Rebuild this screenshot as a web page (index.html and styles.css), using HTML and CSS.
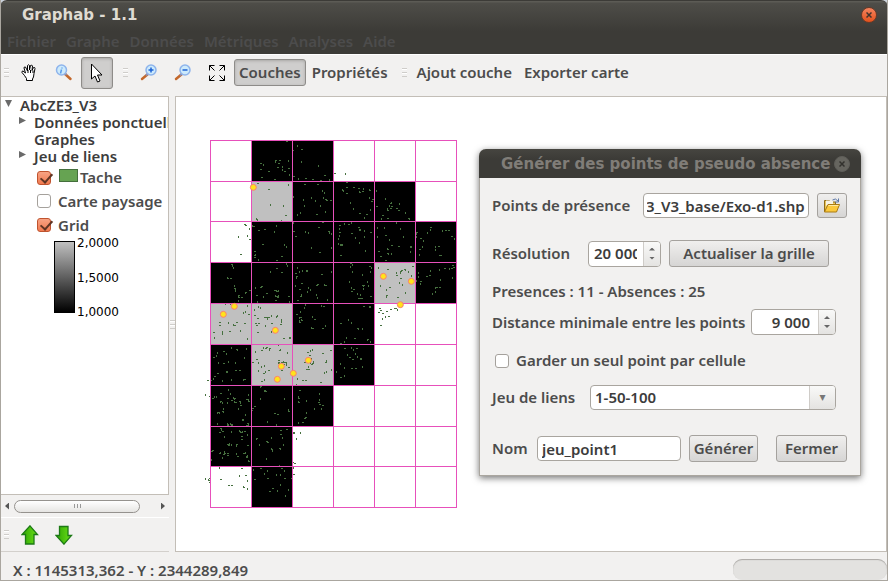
FILE: index.html
```html
<!DOCTYPE html>
<html lang="fr">
<head>
<meta charset="utf-8">
<title>Graphab - 1.1</title>
<link rel="stylesheet" href="styles.css">
</head>
<body>
<div class="window">
  <header class="window-head">
    <div class="titlebar">
      <h1 class="title">Graphab - 1.1</h1>
      <button class="close" type="button" aria-label="Fermer la fenêtre">
        <svg width="6" height="6" viewBox="0 0 6 6"><path d="M.5.5l5 5M5.500.5l-5 5" stroke="#42332c" stroke-width="1.500"/></svg>
      </button>
    </div>
    <nav class="menubar">
      <button type="button">Fichier</button>
      <button type="button">Graphe</button>
      <button type="button">Données</button>
      <button type="button">Métriques</button>
      <button type="button">Analyses</button>
      <button type="button">Aide</button>
    </nav>
  </header>

  <div class="toolbar">
    <span class="grip"></span>
    <button class="tool" type="button" aria-label="Déplacer">
      <svg width="18" height="18" viewBox="0 0 18 18"><path d="M5.500 16.500v-2l-2-3-2.500-3q-.5-1.500 1-1.500l2.500 2-1.500-5q0-1.500 1.500-1l2 4V1.500q1-1.500 2 0V6l1-4.500q1.500-1 2 .5l-.5 4.500 1.500-3q1.500-.5 1.500 1l-1 5-.5 3.500-1 2v1.500z" fill="#fff" stroke="#000"/><path d="M7 6v3M9.500 6v3M12 6.500v2.500" stroke="#000" fill="none"/></svg>
    </button>
    <button class="tool" type="button" aria-label="Information">
      <svg width="18" height="18" viewBox="0 0 18 18"><path d="M9.500 9.500l6 5.500" stroke="#c4682b" stroke-width="2.500" stroke-linecap="round"/><path d="M9.500 9l2 2" stroke="#8f8faf" stroke-width="2"/><circle cx="6.500" cy="6" r="5" fill="#cdeafb" stroke="#8eb4ec" stroke-width="1.500"/><path d="M7 3.500v1M6.500 5.500l-1 4" stroke="#5a9bea" stroke-width="1.500"/></svg>
    </button>
    <button class="tool tool-active" type="button" aria-label="Sélection" aria-pressed="true">
      <svg width="14" height="20" viewBox="0 0 14 20"><path d="M1.500 1v15l3.500-3 2.500 6 2.500-1-2.500-6h4.500z" fill="#fff" stroke="#000"/></svg>
    </button>
    <span class="grip"></span>
    <button class="tool" type="button" aria-label="Zoom avant">
      <svg width="18" height="18" viewBox="0 0 18 18"><path d="M8 10l-6 5" stroke="#c4682b" stroke-width="2.500" stroke-linecap="round"/><path d="M8 9.500l-2 2" stroke="#8f8faf" stroke-width="2"/><circle cx="11" cy="6" r="5" fill="#cdeafb" stroke="#8eb4ec" stroke-width="1.500"/><path d="M8.500 6h5M11 3.500v5" stroke="#1c62d6" stroke-width="1.500"/></svg>
    </button>
    <button class="tool" type="button" aria-label="Zoom arrière">
      <svg width="18" height="18" viewBox="0 0 18 18"><path d="M8 10l-6 5" stroke="#c4682b" stroke-width="2.500" stroke-linecap="round"/><path d="M8 9.500l-2 2" stroke="#8f8faf" stroke-width="2"/><circle cx="11" cy="6" r="5" fill="#cdeafb" stroke="#8eb4ec" stroke-width="1.500"/><path d="M8.500 6h5" stroke="#1c62d6" stroke-width="1.500"/></svg>
    </button>
    <button class="tool" type="button" aria-label="Vue globale">
      <svg width="18" height="18" viewBox="0 0 18 18"><path d="M6.500 1.500h-5v5M11.500 1.500h5v5M6.500 16.500h-5v-5M11.500 16.500h5v-5M1.500 1.500l5 5M16.500 1.500l-5 5M1.500 16.500l5-5M16.500 16.500l-5-5" fill="none" stroke="#000"/></svg>
    </button>
    <button class="text-tool text-tool-active" type="button" aria-pressed="true">Couches</button>
    <button class="text-tool" type="button">Propriétés</button>
    <span class="grip"></span>
    <button class="text-tool" type="button">Ajout couche</button>
    <button class="text-tool" type="button">Exporter carte</button>
  </div>

  <main class="workspace">
    <aside class="side">
      <div class="tree">
        <ul class="nodes">
          <li class="node root"><span class="arrow open"></span>AbcZE3_V3</li>
          <li class="node"><span class="arrow"></span>Données ponctuelles</li>
          <li class="node leaf">Graphes</li>
          <li class="node"><span class="arrow"></span>Jeu de liens</li>
        </ul>
        <label class="layer"><input class="check" type="checkbox" checked><span class="swatch"></span><span>Tache</span></label>
        <label class="layer"><input class="check" type="checkbox"><span>Carte paysage</span></label>
        <label class="layer"><input class="check" type="checkbox" checked><span>Grid</span></label>
        <div class="legend">
          <div class="ramp"></div>
          <div class="ramp-values"><span>2,0000</span><span>1,5000</span><span>1,0000</span></div>
        </div>
      </div>
      <div class="scroll">
        <span class="scroll-arrow left"></span>
        <div class="scroll-track"><div class="thumb"><i></i><i></i><i></i></div></div>
        <span class="scroll-arrow right"></span>
      </div>
      <div class="layer-tools">
        <span class="grip"></span>
        <button class="tool" type="button" aria-label="Monter">
          <svg width="18" height="20" viewBox="0 0 18 20"><defs><linearGradient id="leaf"><stop offset="0" stop-color="#2fa503"/><stop offset="1" stop-color="#6be01a"/></linearGradient></defs><path d="M9 .8l7.500 8.700h-3.500v9.500h-8.500v-9.500h-3.500z" fill="url(#leaf)" stroke="#1d7a16" stroke-width="1.300"/></svg>
        </button>
        <button class="tool" type="button" aria-label="Descendre">
          <svg width="18" height="20" viewBox="0 0 18 20"><path d="M9 19.200l7.500-8.700h-3.500v-9h-8.500v9h-3.500z" fill="url(#leaf)" stroke="#1d7a16" stroke-width="1.300"/></svg>
        </button>
      </div>
    </aside>
    <div class="splitter"><span class="grip"></span></div>
    <section class="map" aria-label="Carte">
      <svg class="map-drawing" width="265" height="385" viewBox="0 0 795 1155" shape-rendering="crispEdges">
        <g fill="#000">
          <path d="M154 31H400V154H154zM277 154H646V274H277zM154 274H769V397H154zM31 397H523V520H31zM646 397H769V520H646zM277 520H523V643H277zM31 643H154V766H31zM400 643H523V766H400zM31 766H400V889H31zM31 889H277V1009H31zM154 1009H277V1132H154z"/>
        </g>
        <path fill="#c0c0c0" d="M154 154H277V274H154zM523 397H646V520H523zM31 520H277V643H31zM154 643H400V766H154z"/>
        <g fill="none" stroke="#46703f" stroke-width="3">
          <g>
            <path transform="translate(-3 0)" d="M261 34h6M280 60h6M306 58h6M183 100h6M183 118h6M229 91h6M240 91h6M238 100h6M234 112h6M207 124h6M256 125h6M268 115h6M186 142h6M226 148h6M282 140h6M318 144h6M338 147h6M376 136h6M362 151h6M404 130h6M173 160h6M207 178h6M314 163h6M355 163h6M440 157h6M258 256h6M351 253h6M378 208h6M382 211h6M394 210h6M441 173h6M441 190h6M462 172h6M477 175h6M479 187h6M490 184h6M510 182h6M520 208h6M517 214h6M480 249h6M502 252h6M530 230h6M573 220h6M577 230h6M574 235h6M591 235h6M596 240h6M564 242h6M549 256h6M564 265h6M518 274h6M626 265h6M135 274h6M135 283h6M138 286h6M162 290h6M177 301h6M189 344h6M194 298h6M150 328h6M123 373h6M282 304h6M288 319h6M356 292h6M370 277h6M386 304h6M361 366h6M421 286h6M421 308h6M423 342h6M423 345h6M424 375h6M446 282h6M456 310h6M476 291h6M480 299h6M513 307h6M558 316h6M596 349h6M577 346h6M543 379h6M538 364h6M564 358h6M564 370h6M558 391h6M650 308h6M662 325h6M694 292h6M738 302h6M746 302h6M756 319h6M724 376h6M720 376h6M716 350h6M165 364h6M165 382h6M661 359h6M664 275h6"/>
            <path transform="translate(0 -3)" d="M292 48v6M190 105v6M227 95v6M247 112v6M247 120v6M265 94v6M268 135v6M304 96v6M355 108v6M294 148v6M389 150v6M437 132v6M265 165v6M280 201v6M211 225v6M250 228v6M169 267v6M172 270v6M244 273v6M310 210v6M313 229v6M302 249v6M292 256v6M334 205v6M366 183v6M373 190v6M370 204v6M346 213v6M361 228v6M376 246v6M429 184v6M426 181v6M477 187v6M489 177v6M508 180v6M451 219v6M461 237v6M508 204v6M492 265v6M510 240v6M528 184v6M556 208v6M561 237v6M568 228v6M574 220v6M598 222v6M616 249v6M544 268v6M627 267v6M157 288v6M148 297v6M142 318v6M115 321v6M223 306v6M229 288v6M253 345v6M259 351v6M280 279v6M316 306v6M325 309v6M388 310v6M394 312v6M334 355v6M394 355v6M418 298v6M418 318v6M415 327v6M415 342v6M427 345v6M433 282v6M454 280v6M466 324v6M478 300v6M492 303v6M492 322v6M478 339v6M481 300v6M495 363v6M532 294v6M532 320v6M553 295v6M568 331v6M574 372v6M589 280v6M600 298v6M609 322v6M561 357v6M565 372v6M630 366v6M633 352v6M630 352v6M648 313v6M648 322v6M682 310v6M690 301v6M670 334v6M667 352v6M706 351v6M706 361v6M727 303v6M764 327v6M658 375v6M165 375v6"/>
          </g>
          <g transform="translate(0 375)">
            <path transform="translate(-3 0)" d="M96 28h6M85 70h6M93 70h6M104 99h6M116 122h6M116 128h6M127 126h6M138 112h6M149 105h6M166 2h6M232 16h6M246 4h6M230 41h6M246 51h6M172 122h6M182 96h6M186 94h6M202 116h6M229 107h6M231 110h6M225 106h6M231 123h6M233 127h6M229 137h6M268 124h6M289 55h6M290 65h6M321 46h6M322 49h6M302 124h6M306 85h6M350 91h6M353 87h6M367 58h6M379 92h6M293 137h6M301 103h6M454 24h6M456 109h6M463 103h6M490 90h6M492 92h6M476 131h6M480 131h6M486 129h6M510 34h6M513 124h6M564 43h6M569 96h6M592 61h6M602 48h6M606 46h6M616 42h6M640 34h6M604 70h6M562 121h6M595 127h6M664 79h6M682 64h6M690 62h6M708 97h6M712 97h6M720 97h6M735 39h6M757 40h6M760 30h6M762 37h6M77 145h6M82 145h6M61 202h6M60 210h6M42 232h6M90 228h6M104 210h6M111 203h6M135 204h6M147 177h6M166 181h6M174 190h6M195 187h6M202 187h6M208 187h6M168 206h6M176 206h6M174 233h6M170 210h6M217 204h6M242 208h6M251 250h6M290 177h6M303 186h6M307 196h6M300 201h6M338 219h6M369 219h6M345 192h6M371 155h6M391 145h6M424 204h6M474 220h6M465 250h6M424 264h6M509 154h6M509 157h6M493 153h6M505 252h6M541 160h6M537 173h6M542 167h6M550 175h6M560 168h6M572 164h6M584 160h6M588 160h6M568 183h6M543 211h6M72 288h6M72 290h6M42 308h6M72 324h6M110 282h6M44 365h6M53 356h6M108 346h6M121 347h6M24 376h6M136 372h6M198 280h6M210 280h6M186 286h6M202 278h6M239 287h6M159 321h6M170 312h6M192 354h6M186 378h6M206 347h6M238 317h6M246 323h6M256 323h6M251 329h6M245 345h6M267 337h6M325 292h6M330 302h6M315 322h6M340 325h6M337 328h6M370 296h6M379 322h6M322 342h6M326 342h6M310 376h6M392 287h6M434 281h6M470 279h6M449 308h6M460 313h6M483 311h6M483 314h6M457 339h6M468 341h6M424 366h6"/>
            <path transform="translate(0 -3)" d="M96 34v6M101 38v6M83 70v6M102 92v6M107 102v6M107 109v6M114 126v6M114 138v6M136 115v6M176 14v6M262 34v6M259 28v6M211 50v6M165 100v6M190 127v6M171 142v6M234 108v6M226 122v6M236 122v6M268 142v6M292 38v6M299 52v6M306 49v6M290 68v6M287 92v6M322 112v6M325 100v6M331 106v6M349 120v6M351 130v6M372 91v6M382 136v6M394 50v6M304 120v6M450 35v6M457 30v6M456 50v6M447 80v6M453 100v6M472 118v6M480 120v6M486 60v6M491 92v6M505 92v6M489 102v6M513 40v6M510 51v6M503 82v6M536 38v6M542 92v6M560 105v6M590 55v6M601 55v6M615 44v6M625 50v6M633 64v6M607 89v6M597 84v6M560 126v6M616 115v6M654 53v6M655 66v6M650 78v6M660 86v6M690 48v6M705 100v6M706 112v6M698 118v6M718 45v6M748 43v6M756 69v6M722 75v6M90 147v6M75 147v6M142 153v6M129 174v6M135 170v6M74 180v6M86 205v6M101 210v6M66 230v6M66 238v6M122 228v6M44 250v6M142 252v6M174 155v6M164 164v6M181 160v6M201 188v6M214 184v6M232 182v6M229 185v6M201 192v6M196 213v6M243 200v6M245 196v6M215 232v6M268 248v6M271 250v6M234 270v6M317 151v6M313 160v6M302 172v6M297 190v6M305 195v6M297 198v6M338 186v6M335 220v6M375 213v6M363 154v6M399 261v6M445 194v6M454 204v6M475 222v6M487 222v6M439 250v6M434 262v6M503 255v6M511 262v6M557 186v6M548 193v6M593 164v6M95 280v6M52 295v6M50 302v6M78 297v6M54 325v6M84 322v6M78 350v6M81 352v6M107 325v6M132 310v6M138 282v6M111 286v6M41 372v6M67 378v6M94 374v6M129 376v6M189 280v6M208 284v6M165 290v6M240 285v6M262 294v6M175 324v6M183 337v6M194 332v6M196 352v6M174 348v6M234 325v6M239 324v6M250 321v6M258 325v6M260 330v6M192 375v6M337 285v6M332 288v6M325 310v6M334 312v6M340 322v6M330 324v6M378 318v6M325 337v6M372 355v6M378 350v6M394 344v6M291 372v6M454 280v6M460 286v6M465 296v6M441 300v6M472 305v6M421 326v6M486 336v6M433 340v6M409 352v6M433 364v6"/>
          </g>
          <g transform="translate(0 750)">
            <path transform="translate(-3 0)" d="M24 2h6M34 2h6M64 40h6M30 48h6M38 54h6M64 64h6M84 54h6M95 61h6M105 56h6M108 66h6M122 76h6M121 64h6M142 58h6M146 64h6M56 98h6M68 94h6M128 119h6M128 122h6M84 132h6M93 133h6M84 137h6M96 137h6M142 136h6M144 130h6M198 34h6M196 31h6M182 20h6M164 80h6M158 86h6M156 90h6M225 100h6M234 103h6M266 93h6M258 139h6M300 31h6M297 54h6M296 68h6M357 66h6M360 73h6M369 76h6M316 114h6M318 112h6M308 127h6M362 8h6M318 0h6M64 146h6M69 154h6M60 157h6M120 154h6M124 156h6M135 154h6M126 169h6M84 193h6M87 196h6M111 194h6M126 178h6M144 195h6M60 220h6M75 220h6M83 220h6M72 223h6M85 226h6M114 229h6M40 212h6M34 214h6M132 220h6M140 229h6M141 232h6M148 244h6M172 175h6M201 184h6M203 187h6M243 151h6M243 163h6M261 148h6M216 209h6M240 206h6M283 158h6M283 160h6M284 250h6M278 248h6M126 265h6M63 298h6M138 286h6M87 316h6M96 316h6M132 322h6M30 294h6M30 306h6M26 302h6M182 265h6M165 298h6M204 295h6M219 325h6M210 334h6M255 295h6M276 295h6M282 283h6M245 265h6"/>
            <path transform="translate(0 -3)" d="M16 45v6M43 50v6M49 50v6M85 30v6M90 42v6M61 66v6M67 68v6M82 68v6M102 58v6M102 67v6M99 54v6M120 70v6M145 44v6M145 60v6M52 99v6M58 99v6M71 88v6M70 97v6M114 88v6M135 105v6M52 132v6M82 132v6M90 132v6M96 134v6M145 134v6M181 21v6M181 57v6M194 32v6M253 57v6M265 90v6M202 126v6M229 136v6M290 15v6M294 50v6M294 66v6M318 62v6M343 88v6M358 42v6M358 60v6M364 87v6M319 98v6M294 128v6M64 150v6M73 170v6M94 157v6M118 154v6M126 155v6M142 165v6M87 193v6M108 198v6M94 195v6M61 218v6M67 234v6M73 217v6M110 222v6M36 214v6M34 240v6M136 220v6M142 228v6M145 242v6M169 177v6M178 196v6M214 174v6M201 186v6M214 208v6M217 214v6M246 174v6M250 195v6M241 206v6M199 237v6M238 258v6M301 158v6M289 177v6M280 264v6M58 264v6M118 288v6M142 303v6M130 322v6M142 326v6M16 297v6M25 300v6M160 270v6M193 282v6M202 273v6M229 286v6M241 286v6M252 273v6M240 314v6M232 333v6M265 330v6M256 348v6"/>
          </g>
        </g>
        <path fill="none" stroke="#e750bb" stroke-width="3" d="M31.500 31V1134M154.500 31V1134M277.500 31V1134M400.500 31V1134M523.500 31V1134M646.500 31V1134M769.500 31V1134M30 31.500H771M30 154.500H771M30 274.500H771M30 397.500H771M30 520.500H771M30 643.500H771M30 766.500H771M30 889.500H771M30 1009.500H771M30 1132.500H771"/>
        <g fill="#ffe31b" stroke="#fa8072" stroke-width="3" shape-rendering="auto">
          <circle cx="160" cy="172" r="9"/>
          <circle cx="550" cy="439" r="9"/>
          <circle cx="634" cy="454" r="9"/>
          <circle cx="601" cy="524" r="9"/>
          <circle cx="103" cy="529" r="9"/>
          <circle cx="70" cy="553" r="9"/>
          <circle cx="226" cy="601" r="9"/>
          <circle cx="325" cy="691" r="9"/>
          <circle cx="244" cy="709" r="9"/>
          <circle cx="280" cy="730" r="9"/>
          <circle cx="232" cy="748" r="9"/>
        </g>
      </svg>
    </section>
  </main>

  <footer class="status">
    <output>X : 1145313,362 - Y : 2344289,849</output>
    <div class="trough"></div>
  </footer>
</div>

<form class="dialog" role="dialog" aria-labelledby="dialog-title">
  <header class="dialog-head">
    <h2 class="title" id="dialog-title">Générer des points de pseudo absence</h2>
    <button class="close muted" type="button" aria-label="Fermer le dialogue">
      <svg width="6" height="6" viewBox="0 0 6 6"><path d="M.5.5l5 5M5.500.5l-5 5" stroke="#33322e" stroke-width="1.500"/></svg>
    </button>
  </header>
  <div class="dialog-body">
    <div class="row first">
      <label for="presence">Points de présence</label>
      <input class="field path" id="presence" type="text" value="AbcZE3_V3_base/Exo-d1.shp">
      <button class="button browse" type="button" aria-label="Parcourir">
        <svg width="18" height="16" viewBox="0 0 18 16"><path d="M1.500 14V2.500h5l1 1.500h5v3" fill="#e8c65a" stroke="#8f6b16"/><path d="M3 2.500h7v5h-7z" fill="#f7f3e4"/><path d="M1.500 14l3.500-7.500h11.500l-3 7.500z" fill="#fbc93c" stroke="#a87a14"/><path d="M5.500 7.500h10" stroke="#ffe9a0"/><path d="M9.500 2q3-2.500 5.500 1M15.500.5v3.500h-3.500" fill="none" stroke="#5d78a8"/></svg>
      </button>
    </div>
    <div class="row resolution">
      <label for="resolution">Résolution</label>
      <span class="spinner"><input id="resolution" type="text" value="20 000"><span class="steps"><button type="button" aria-label="Augmenter"></button><button class="down" type="button" aria-label="Diminuer"></button></span></span>
      <button class="button refresh" type="button">Actualiser la grille</button>
    </div>
    <p class="summary">Presences : 11 - Absences : 25</p>
    <div class="row distance">
      <label for="distance">Distance minimale entre les points</label>
      <span class="spinner wide"><input id="distance" type="text" value="9 000"><span class="steps"><button type="button" aria-label="Augmenter"></button><button class="down" type="button" aria-label="Diminuer"></button></span></span>
    </div>
    <label class="row single"><input class="check" type="checkbox"><span>Garder un seul point par cellule</span></label>
    <div class="row links">
      <label for="links">Jeu de liens</label>
      <span class="combo"><select id="links"><option>1-50-100</option></select></span>
    </div>
    <div class="row name">
      <label for="name">Nom</label>
      <input class="field" id="name" type="text" value="jeu_point1">
      <button class="button" type="submit">Générer</button>
      <button class="button dismiss" type="button">Fermer</button>
    </div>
  </div>
</form>
<script src="script.js"></script>
</body>
</html>
```
FILE: styles.css
```css
* { box-sizing: border-box; }

body {
  margin: 0;
  background: #f2f1f0;
  color: #4c4c4c;
  font: 600 15px/17px "Noto Sans", "Open Sans", sans-serif;
}

button, input, select {
  margin: 0;
  padding: 0;
  border: 0;
  background: none;
  color: inherit;
  font: inherit;
}

h1, h2, p, ul { margin: 0; padding: 0; }

.window {
  display: flex;
  flex-direction: column;
  min-height: 100vh;
  border: 1px solid #aaa69f;
  border-top: 0;
  overflow: hidden;
}

.window-head {
  margin: 0 -1px;
  height: 54px;
  border-top: 1px solid #3c3b37;
  border-radius: 7px 7px 0 0;
  background: linear-gradient(#5c5b55 0 1px, #4e4d48 2px, #3c3b37 30px);
  box-shadow: 0 -8px 0 #cbd3dd;
}

.titlebar {
  display: flex;
  align-items: center;
  justify-content: space-between;
  height: 27px;
  padding: 0 11px 0 22px;
}

.title {
  color: #dfdbd2;
  font: bold 15px/16px "DejaVu Sans", sans-serif;
  white-space: nowrap;
}

.close {
  display: flex;
  align-items: center;
  justify-content: center;
  width: 16px;
  height: 16px;
  border-radius: 8px;
  border: 1px solid #6b3a27;
  background: linear-gradient(#f5845f, #e2511c);
}

.muted {
  border-color: #5f5e59;
  background: #66655f;
}

.menubar {
  display: flex;
  gap: 10px;
  padding: 5px 7px;
  color: #4c4c4c;
}

.toolbar {
  display: flex;
  align-items: center;
  height: 42px;
  padding: 0 3px 6px;
  border-top: 1px solid #fff;
}

.grip {
  flex: none;
  width: 5px;
  height: 9px;
  background: repeating-linear-gradient(#cfcdca 0 1px, #fff 1px 2px, transparent 2px 4px);
}

.tool {
  display: flex;
  align-items: center;
  justify-content: center;
  flex: none;
  width: 34px;
  height: 32px;
}

.toolbar .grip + .tool { margin-left: 4px; }
.toolbar .grip + .text-tool { margin-left: 4px; }
.toolbar .tool + .grip { margin-left: 10px; }
.toolbar .text-tool + .grip { margin-left: 8px; }

.tool-active, .text-tool-active {
  border: 1px solid #8e8c89;
  border-radius: 3px;
  background: #cfcecd;
  box-shadow: inset 0 1px 3px #a9a8a6;
}

.tool-active { width: 32px; }

.text-tool {
  height: 27px;
  padding: 0 6px;
  white-space: nowrap;
}

.text-tool-active { padding: 0 4px; }

.workspace {
  display: flex;
  flex: 1;
}

.side {
  display: flex;
  flex-direction: column;
  width: 168px;
  flex: none;
}

.tree {
  flex: 1;
  border: 1px solid #c3beb7;
  border-left: 0;
  background: #fff;
  color: #3c3c3c;
  overflow: hidden;
}

.nodes { list-style: none; white-space: nowrap; }

.node {
  display: flex;
  align-items: center;
  padding-left: 18px;
}

.root { padding-left: 4px; }
.leaf { padding-left: 33px; }

.arrow {
  flex: none;
  width: 7px;
  height: 7px;
  margin: 0 8px 4px 0;
  background: #6a6a6a;
  clip-path: polygon(0 0, 100% 50%, 0 100%);
}

.open { clip-path: polygon(0 0, 100% 0, 50% 100%); }

.layer {
  display: flex;
  align-items: center;
  height: 24px;
  padding-left: 36px;
  color: #4c4c4c;
  white-space: nowrap;
}

.check {
  flex: none;
  appearance: none;
  width: 14px;
  height: 14px;
  margin-right: 7px;
  border: 1px solid #a5a19c;
  border-radius: 3px;
  background: #fff;
}

.check:checked {
  border-color: #c0532e;
  background: linear-gradient(#f7a384, #f17a50);
}

.check:checked::after {
  content: "";
  display: block;
  width: 5px;
  height: 10px;
  margin: -1px 0 0 5px;
  border: solid #5f3524;
  border-width: 0 2px 2px 0;
  transform: rotate(42deg);
}

.swatch {
  width: 19px;
  height: 13px;
  margin: 0 2px 4px 1px;
  border: 1px solid #446f3c;
  background: #66a352;
}

.layer:has(.swatch) { padding-top: 1px; }

.legend {
  display: flex;
  gap: 2px;
  margin: 4px 0 0 53px;
  color: #000;
  font: 12px/14px "DejaVu Sans", sans-serif;
}

.ramp {
  width: 21px;
  height: 72px;
  border: 1px solid #000;
  background: linear-gradient(#c0c0c0, #000);
}

.ramp-values {
  display: flex;
  flex-direction: column;
  justify-content: space-between;
  height: 83px;
  margin-top: -5px;
}

.scroll {
  display: flex;
  align-items: center;
  height: 22px;
  padding: 0 4px;
}

.scroll-arrow {
  width: 4px;
  height: 7px;
  background: #555;
  clip-path: polygon(100% 0, 0 50%, 100% 100%);
}

.right { clip-path: polygon(0 0, 100% 50%, 0 100%); }

.scroll-track { flex: 1; padding: 0 21px 0 5px; }

.thumb {
  display: flex;
  align-items: center;
  justify-content: center;
  gap: 2px;
  height: 13px;
  border: 1px solid #95928e;
  border-radius: 7px;
  background: linear-gradient(#fff, #e6e5e3);
}

.thumb i { width: 1px; height: 4px; background: #999; }

.layer-tools {
  display: flex;
  align-items: center;
  height: 35px;
  padding-left: 3px;
  border-top: 1px solid #fff;
  border-bottom: 1px solid #d3d0cc;
}

.layer-tools .grip { margin-right: 4px; }

.splitter {
  display: flex;
  align-items: center;
  justify-content: center;
  width: 6px;
}

.map {
  flex: 1;
  border: 1px solid #c3beb7;
  background: #fff;
}

.map-drawing { display: block; margin: 33px 0 0 24px; }

.status {
  display: flex;
  align-items: center;
  justify-content: space-between;
  height: 28px;
  padding-left: 12px;
}

.status output { padding-top: 8px; }

.trough {
  width: 154px;
  height: 21px;
  margin-top: 6px;
  border-radius: 9px;
  background: #e3e2e0;
  box-shadow: inset 0 1px 1px #aaa8a5;
}

/* The dialog floats over the main window. */
.dialog {
  position: absolute;
  top: 149px;
  left: 479px;
  width: 382px;
  border: 1px solid #aaa69f;
  border-top: 0;
  border-radius: 7px 7px 0 0;
  background: #f2f1f0;
  box-shadow: 0 2px 7px rgba(0, 0, 0, .55);
}

.dialog-head {
  display: flex;
  align-items: center;
  justify-content: space-between;
  height: 29px;
  margin: 0 -1px;
  padding: 0 11px 0 22px;
  border-radius: 7px 7px 0 0;
  background: linear-gradient(#464540, #3c3b37 10px);
}

.dialog-head .title { color: #807d78; }

.dialog-body {
  display: flex;
  flex-direction: column;
  padding: 15px 13px 13px 12px;
}

.row {
  display: flex;
  align-items: center;
  white-space: nowrap;
}

.first { gap: 8px; }
.first label { width: 143px; }

.field {
  height: 25px;
  padding: 0 4px;
  border: 1px solid #a9a59f;
  border-radius: 4px;
  background: #fff;
  color: #3c3c3c;
}

.path { flex: 1; min-width: 0; padding: 0 3px; }

.button {
  height: 27px;
  border: 1px solid #a5a29e;
  border-radius: 3px;
  background: linear-gradient(#f0efee, #d6d5d4);
}

.browse {
  display: flex;
  align-items: center;
  justify-content: center;
  width: 30px;
  height: 25px;
}

.resolution { margin-top: 22px; gap: 8px; }
.resolution label { width: 88px; }
.refresh { width: 160px; }

.spinner {
  display: flex;
  width: 73px;
  height: 26px;
  border: 1px solid #a9a59f;
  border-radius: 4px;
  background: #fff;
  color: #3c3c3c;
  overflow: hidden;
}

.spinner input { flex: 1; min-width: 0; margin: 0 6px 0 5px; }

.steps {
  display: flex;
  flex-direction: column;
  align-items: center;
  justify-content: center;
  gap: 6px;
  width: 17px;
  border-left: 1px solid #cfccc8;
  background: linear-gradient(#f9f9f8, #e4e3e1);
}

.steps button {
  width: 6px;
  height: 3px;
  background: #666;
  clip-path: polygon(50% 0, 100% 100%, 0 100%);
}

.steps .down { clip-path: polygon(0 0, 100% 0, 50% 100%); }

.wide { width: 85px; }
.wide input { text-align: right; margin-right: 8px; }

.summary { margin-top: 16px; }

.distance { margin-top: 9px; justify-content: space-between; padding-right: 11px; }

.single { margin-top: 17px; padding-left: 3px; }

.links { margin-top: 16px; gap: 8px; padding-right: 11px; }
.links label { width: 90px; }

.combo {
  flex: 1;
  display: flex;
  border: 1px solid #a9a59f;
  border-radius: 4px;
  background: #fff;
  overflow: hidden;
}

.combo select {
  flex: 1;
  appearance: none;
  height: 23px;
  padding-left: 4px;
  color: #3c3c3c;
}

.combo::after {
  content: "▾";
  width: 25px;
  border-left: 1px solid #cfccc8;
  background: linear-gradient(#f9f9f8, #e4e3e1);
  color: #777;
  font: 12px/23px "DejaVu Sans", sans-serif;
  text-align: center;
}

.name { margin-top: 25px; gap: 8px; }
.name label { width: 37px; }
.name .field { flex: 1; min-width: 0; }
.name .button { width: 69px; }
.name .dismiss { width: 71px; margin-left: 10px; }
```
FILE: script.js
```js
// Long paths show their file name rather than their first folder.
const path = document.getElementById("presence");
path.scrollLeft = path.scrollWidth;
```
